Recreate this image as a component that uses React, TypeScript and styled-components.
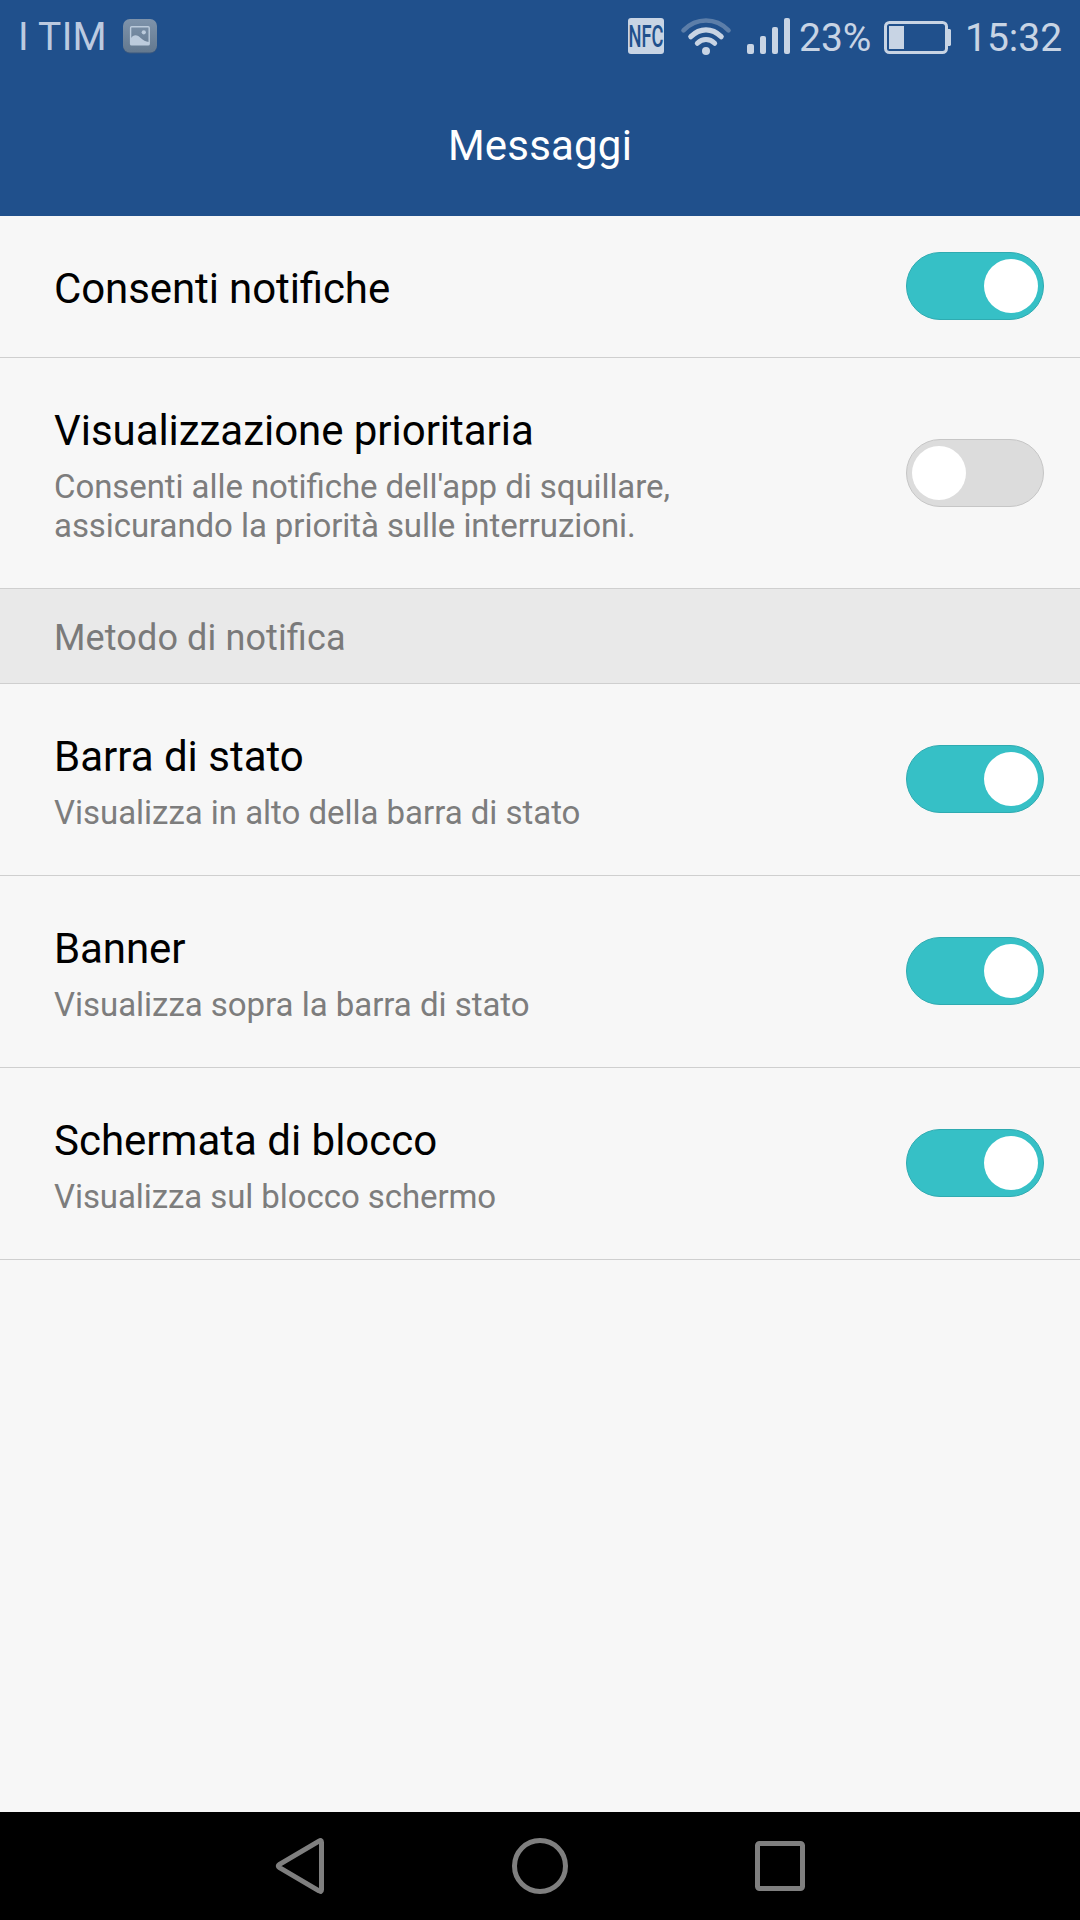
import React, { useState } from "react";
import styled, { createGlobalStyle } from "styled-components";

const GlobalStyle = createGlobalStyle`
  * { box-sizing: border-box; }
  body { margin: 0; background: #f7f7f7; }
`;

const Screen = styled.div`
  width: 1080px;
  height: 1920px;
  display: flex;
  flex-direction: column;
  overflow: hidden;
  background: #f7f7f7;
  color: #000;
  font-family: Roboto, sans-serif;
  font-feature-settings: "liga" 1;
`;

const Header = styled.header`
  height: 216px;
  flex: none;
  background: #20508c;
`;

const StatusBar = styled.div`
  height: 72px;
  display: flex;
  justify-content: space-between;
  padding: 0 18px 0 18px;
  color: #c8d4e4;
  font-size: 39px;
  line-height: 46px;
`;

const StatusGroup = styled.div`
  display: flex;
  align-items: flex-start;
`;

const StatusText = styled.span<{ $top: number; $width: number; $left?: number; $dim?: boolean }>`
  width: ${(p) => p.$width}px;
  margin-top: ${(p) => p.$top}px;
  padding-left: ${(p) => p.$left ?? 0}px;
  white-space: nowrap;
  color: ${(p) => (p.$dim ? "#bccae0" : "inherit")};
  letter-spacing: ${(p) => (p.$dim ? "0.3px" : "normal")};
`;

const Glyph = styled.svg`
  display: block;
  flex: none;
`;

const Title = styled.h1`
  margin: 0;
  padding-top: 49px;
  text-align: center;
  font-size: 42px;
  line-height: 49px;
  font-weight: 400;
  letter-spacing: 0.2px;
  color: #fff;
`;

const List = styled.main`
  flex: 1;
  display: flex;
  flex-direction: column;
`;

const Row = styled.section<{ $height: number }>`
  height: ${(p) => p.$height}px;
  display: flex;
  justify-content: space-between;
  align-items: flex-start;
  padding: 0 36px 0 54px;
  border-bottom: 1px solid #cfcfcf;
`;

const Labels = styled.div`
  width: 690px;
  padding-top: 48px;
`;

const Label = styled.div<{ $spacing: number }>`
  font-size: 42px;
  line-height: 49px;
  letter-spacing: ${(p) => p.$spacing}px;
`;

const Summary = styled.div<{ $spacing: number }>`
  margin-top: 12px;
  font-size: 33px;
  line-height: 39px;
  letter-spacing: ${(p) => p.$spacing}px;
  color: #7d7d7d;
  white-space: pre-line;
`;

const SectionHeader = styled.h2`
  margin: 0;
  height: 95px;
  padding: 28px 54px 0;
  border-bottom: 1px solid #cfcfcf;
  background: #e9e9e9;
  color: #7a7a7a;
  font-size: 36px;
  line-height: 42px;
  font-weight: 400;
  letter-spacing: 0.12px;
`;

const Switch = styled.button<{ $on: boolean; $top: number }>`
  margin: ${(p) => p.$top}px 0 0;
  display: flex;
  justify-content: ${(p) => (p.$on ? "flex-end" : "flex-start")};
  align-items: center;
  width: 138px;
  height: 68px;
  padding: 0 5px;
  border: 1px solid ${(p) => (p.$on ? "#2fabb1" : "#c6c6c6")};
  border-radius: 34px;
  background: ${(p) => (p.$on ? "#36c0c6" : "#dcdcdc")};
`;

const Knob = styled.span`
  width: 54px;
  height: 54px;
  border-radius: 50%;
  background: #fff;
`;

const NavBar = styled.nav`
  height: 108px;
  flex: none;
  display: flex;
  justify-content: center;
  align-items: center;
  gap: 180px;
  background: #000;
`;

const NavIcon = styled.svg`
  display: block;
  width: 60px;
  height: 60px;
  fill: none;
  stroke: #7f7f7f;
  stroke-width: 5;
  stroke-linejoin: round;
`;

interface SettingProps {
  label: string;
  summary?: string;
  height: number;
  initial?: boolean;
  labelSpacing?: number;
  summarySpacing?: number;
}

function Setting({
  label,
  summary,
  height,
  initial = true,
  labelSpacing = 0,
  summarySpacing = 0,
}: SettingProps) {
  const [on, setOn] = useState(initial);
  return (
    <Row $height={height}>
      <Labels>
        <Label $spacing={labelSpacing}>{label}</Label>
        {summary && <Summary $spacing={summarySpacing}>{summary}</Summary>}
      </Labels>
      <Switch
        $on={on}
        $top={Math.floor((height - 69) / 2)}
        role="switch"
        aria-checked={on}
        onClick={() => setOn(!on)}
      >
        <Knob />
      </Switch>
    </Row>
  );
}

function GalleryIcon() {
  return (
    <Glyph width="36" height="72" viewBox="122 0 36 72">
      <defs>
        <linearGradient id="gallery" x1="0" y1="0" x2="0" y2="1">
          <stop offset="0" stopColor="#7e93ab" />
          <stop offset="1" stopColor="#64798f" />
        </linearGradient>
      </defs>
      <rect x="123" y="20" width="34" height="33.5" rx="7" fill="#3a587f" />
      <rect x="123" y="19" width="34" height="33.5" rx="7" fill="url(#gallery)" />
      <rect x="130.6" y="26.7" width="18.6" height="18.2" rx="1" fill="none" stroke="#bccbdc" strokeWidth="1.4" />
      <path d="M131 38C132 36.4 133.800 35.200 135.500 35.200C137.500 35.200 139 36.500 141 38.200C143 40 145.500 41.500 149 42V45H131Z" fill="#bccbdc" />
      <circle cx="143.800" cy="32.300" r="2.100" fill="#bccbdc" />
    </Glyph>
  );
}

function StatusIcons() {
  return (
    <Glyph width="172" height="72" viewBox="628 0 172 72" fill="#c8d4e4">
      <rect x="628" y="18" width="36" height="36" rx="3" />
      <text x="628.5" y="47" fontFamily="Roboto, sans-serif" fontSize="31" fontWeight="500" textLength="35" lengthAdjust="spacingAndGlyphs" fill="#20508c">NFC</text>
      <g fill="none" stroke="#c8d4e4" strokeLinecap="round">
        <path d="M683.500 30.300C696.500 17.300 715.500 17.300 728.500 30.300" strokeWidth="4.600" stroke="#5c7ea9" />
        <path d="M690.800 36.700C700 27.700 712 27.700 721.200 36.700" strokeWidth="5.200" />
        <path d="M697.300 43.300C702.500 38.300 709.500 38.300 714.700 43.300" strokeWidth="5" />
      </g>
      <circle cx="706" cy="51" r="4" />
      <rect x="747" y="44" width="7" height="10" rx="2" />
      <rect x="760" y="36" width="6" height="18" rx="2" />
      <rect x="772" y="27" width="6" height="27" rx="2" />
      <rect x="784" y="18" width="6" height="36" rx="2" />
    </Glyph>
  );
}

function BatteryIcon() {
  return (
    <Glyph width="68" height="72" viewBox="884 0 68 72" fill="#c8d4e4">
      <rect x="885.500" y="22.500" width="61" height="30" rx="4" fill="none" stroke="#c8d4e4" strokeWidth="3" />
      <rect x="889" y="26" width="15" height="23" />
      <path d="M948 29H950L951 30V45L950 46H948Z" />
    </Glyph>
  );
}

export default function App() {
  return (
    <>
      <GlobalStyle />
      <Screen>
        <Header>
          <StatusBar>
            <StatusGroup>
              <StatusText $top={14} $width={104} $dim>I TIM</StatusText>
              <GalleryIcon />
            </StatusGroup>
            <StatusGroup>
              <StatusIcons />
              <StatusText $top={15} $width={84}>
                <Nudge>23%</Nudge>
              </StatusText>
              <BatteryIcon />
              <StatusText $top={15} $width={110} $left={13}>15:32</StatusText>
            </StatusGroup>
          </StatusBar>
          <Title>Messaggi</Title>
        </Header>
        <List>
          <Setting label="Consenti notifiche" height={142} labelSpacing={-0.1} />
          <Setting
            label="Visualizzazione prioritaria"
            summary={"Consenti alle notifiche dell'app di squillare,\nassicurando la priorità sulle interruzioni."}
            height={231}
            initial={false}
            labelSpacing={-0.04}
            summarySpacing={-0.075}
          />
          <SectionHeader>Metodo di notifica</SectionHeader>
          <Setting
            label="Barra di stato"
            summary="Visualizza in alto della barra di stato"
            height={192}
            summarySpacing={-0.03}
          />
          <Setting
            label="Banner"
            summary="Visualizza sopra la barra di stato"
            height={192}
            labelSpacing={-0.1}
            summarySpacing={-0.03}
          />
          <Setting
            label="Schermata di blocco"
            summary="Visualizza sul blocco schermo"
            height={192}
            summarySpacing={-0.08}
          />
        </List>
        <NavBar>
          <NavIcon viewBox="0 0 60 60" aria-label="Indietro">
            <path d="M51.500 6.200Q51.500 3.500 49 5.200L9.500 28.400Q7 30 9.500 31.600L49 54.800Q51.500 56.500 51.500 53.800Z" />
          </NavIcon>
          <NavIcon viewBox="0 0 60 60" aria-label="Home">
            <circle cx="30" cy="30" r="25.500" />
          </NavIcon>
          <NavIcon viewBox="0 0 60 60" aria-label="Recenti">
            <rect x="7.500" y="7.500" width="45" height="45" rx="2" />
          </NavIcon>
        </NavBar>
      </Screen>
    </>
  );
}

const Nudge = styled.span`
  margin-left: -1px;
`;
